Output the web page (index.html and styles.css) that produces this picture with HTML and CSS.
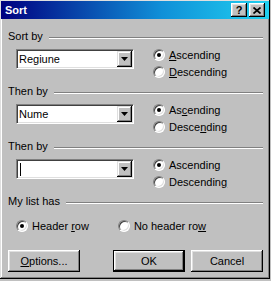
FILE: index.html
```html
<!DOCTYPE html>
<html lang="en">
<head>
  <meta charset="UTF-8">
  <meta name="viewport" content="width=device-width, initial-scale=1.0">
  <title>Sort</title>
  <link rel="stylesheet" href="styles.css">
</head>
<body>
  <div class="window">
    <!-- Title bar -->
    <div class="title-bar">
      <span class="title">Sort</span>
      <div class="title-buttons">
        <span class="title-btn help">?</span>
        <span class="title-btn close">
          <svg width="8" height="7" viewBox="0 0 8 7"><path d="M0.5 0.5L7.5 6.5M7.5 0.5L0.5 6.5" stroke="#000" stroke-width="1.7"/></svg>
        </span>
      </div>
    </div>

    <div class="content">
      <!-- Sort by -->
      <div class="group">
        <div class="group-head"><span>Sort by</span><div class="rule"></div></div>
        <div class="group-body">
          <div class="combo">
            <span class="combo-text">Regiune</span>
            <span class="combo-btn"><svg width="7" height="4" viewBox="0 0 7 4"><polygon points="0,0 7,0 3.5,4" fill="#000"/></svg></span>
          </div>
          <div class="radios">
            <div class="radio"><span class="radio-dot checked"></span><span><u>A</u>scending</span></div>
            <div class="radio"><span class="radio-dot"></span><span><u>D</u>escending</span></div>
          </div>
        </div>
      </div>

      <!-- Then by -->
      <div class="group">
        <div class="group-head"><span>Then by</span><div class="rule"></div></div>
        <div class="group-body">
          <div class="combo">
            <span class="combo-text">Nume</span>
            <span class="combo-btn"><svg width="7" height="4" viewBox="0 0 7 4"><polygon points="0,0 7,0 3.5,4" fill="#000"/></svg></span>
          </div>
          <div class="radios">
            <div class="radio"><span class="radio-dot checked"></span><span>As<u>c</u>ending</span></div>
            <div class="radio"><span class="radio-dot"></span><span>Desce<u>n</u>ding</span></div>
          </div>
        </div>
      </div>

      <!-- Then by -->
      <div class="group">
        <div class="group-head"><span>Then by</span><div class="rule"></div></div>
        <div class="group-body">
          <div class="combo">
            <span class="caret"></span>
            <span class="combo-btn"><svg width="7" height="4" viewBox="0 0 7 4"><polygon points="0,0 7,0 3.5,4" fill="#000"/></svg></span>
          </div>
          <div class="radios">
            <div class="radio"><span class="radio-dot checked"></span><span>Ascendin<u>g</u></span></div>
            <div class="radio"><span class="radio-dot"></span><span>Descendin<u>g</u></span></div>
          </div>
        </div>
      </div>

      <!-- My list has -->
      <div class="group-head"><span>My list has</span><div class="rule"></div></div>
      <div class="radio-row">
        <div class="radio"><span class="radio-dot checked"></span><span>Header <u>r</u>ow</span></div>
        <div class="radio"><span class="radio-dot"></span><span>No header ro<u>w</u></span></div>
      </div>

      <!-- Buttons -->
      <div class="buttons">
        <button class="btn"><u>O</u>ptions...</button>
        <button class="btn default ok">OK</button>
        <button class="btn">Cancel</button>
      </div>
    </div>
  </div>
</body>
</html>
```

FILE: styles.css
```css
body {
  margin: 0;
  padding: 0;
  background-color: #c0c0c0;
  font-family: "Liberation Sans", Arial, sans-serif;
  font-size: 11px;
  color: #000;
}
.window {
  width: 270px;
  height: 279px;
  box-sizing: border-box;
  padding: 1px;
  background-color: #c0c0c0;
  box-shadow: inset -1px -1px #000, inset 1px 1px #dfdfdf, inset -2px -2px #808080, inset 2px 2px #fff;
}
.title-bar {
  height: 18px;
  display: flex;
  align-items: center;
  justify-content: space-between;
  padding: 0 4px 0 4px;
  background: linear-gradient(to right, #000080, #1090d8 60%, #20d0f0);
}
.title {
  color: #fff;
  font-weight: bold;
  font-size: 11px;
}
.title-buttons {
  display: flex;
  gap: 2px;
}
.title-btn {
  width: 16px;
  height: 14px;
  box-sizing: border-box;
  display: flex;
  align-items: center;
  justify-content: center;
  background-color: #c0c0c0;
  box-shadow: inset -1px -1px #000, inset 1px 1px #fff, inset -2px -2px #808080, inset 2px 2px #dfdfdf;
  font-weight: bold;
  font-size: 11px;
  line-height: 14px;
}
.content {
  padding: 11px 6px 0 7px;
}
.group {
  margin-bottom: 5px;
}
.group-head {
  display: flex;
  align-items: center;
  height: 13px;
  line-height: 13px;
}
.rule {
  flex: 1;
  margin-left: 6px;
  margin-top: 2px;
  border-top: 1px solid #808080;
  border-bottom: 1px solid #fff;
}
.group-body {
  display: flex;
  margin-top: 3px;
  padding-left: 8px;
}
.combo {
  width: 118px;
  height: 20px;
  box-sizing: border-box;
  margin-top: 3px;
  display: flex;
  align-items: center;
  background-color: #fff;
  border: 1px solid;
  border-color: #808080 #fff #fff #808080;
  box-shadow: inset 1px 1px #404040, inset -1px -1px #dfdfdf;
  padding: 1px;
}
.combo-text {
  flex: 1;
  padding-left: 1px;
}
.caret {
  width: 1px;
  height: 13px;
  margin-left: 2px;
  background-color: #000;
  flex: none;
  margin-right: auto;
}
.combo-btn {
  width: 15px;
  height: 16px;
  box-sizing: border-box;
  display: flex;
  align-items: center;
  justify-content: center;
  background-color: #c0c0c0;
  box-shadow: inset -1px -1px #000, inset 1px 1px #dfdfdf, inset -2px -2px #808080, inset 2px 2px #fff;
}
.radios {
  margin-left: 19px;
  display: flex;
  flex-direction: column;
}
.radio {
  height: 17px;
  display: flex;
  align-items: center;
  gap: 4px;
  white-space: nowrap;
}
.radio-dot {
  width: 12px;
  height: 12px;
  box-sizing: border-box;
  border-radius: 50%;
  background-color: #fff;
  border: 1px solid;
  border-color: #808080 #fff #fff #808080;
  box-shadow: inset 1px 1px #404040, inset -1px -1px #dfdfdf;
  display: flex;
  align-items: center;
  justify-content: center;
}
.radio-dot.checked::after {
  content: "";
  width: 4px;
  height: 4px;
  border-radius: 50%;
  background-color: #000;
}
.radio-row {
  display: flex;
  gap: 29px;
  margin-top: 9px;
  padding-left: 8px;
}
.buttons {
  display: flex;
  gap: 6px;
  margin-top: 16px;
}
.btn {
  width: 72px;
  height: 22px;
  padding: 0;
  border: none;
  font-family: "Liberation Sans", Arial, sans-serif;
  font-size: 11px;
  color: #000;
  background-color: #c0c0c0;
  box-shadow: inset -1px -1px #000, inset 1px 1px #fff, inset -2px -2px #808080, inset 2px 2px #dfdfdf;
}
.btn.ok {
  margin-left: auto;
}
.btn.default {
  border: 1px solid #000;
}
```
